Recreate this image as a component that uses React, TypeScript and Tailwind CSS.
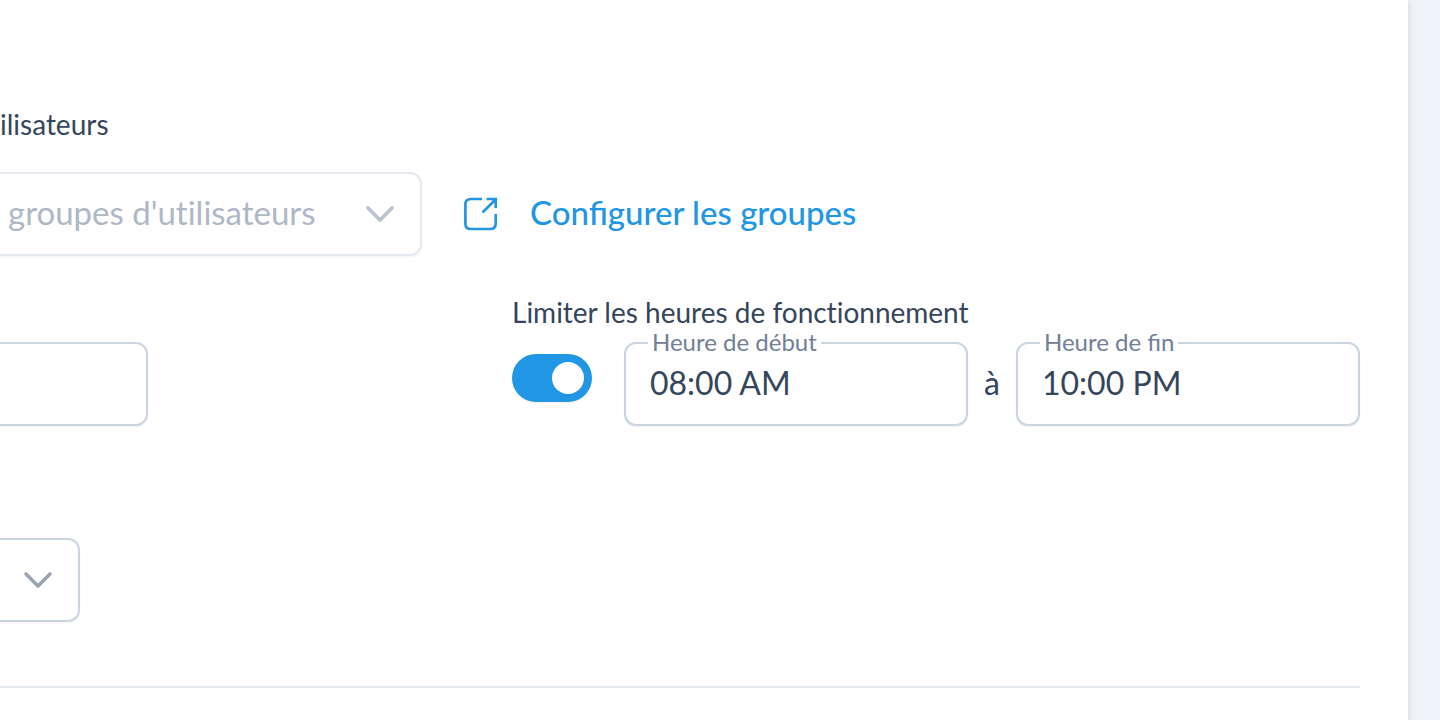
import { useState } from 'react';

function ChevronIcon({ className }: { className: string }) {
    return (
        <svg
            className={`pointer-events-none absolute top-1/2 h-8 w-8 -translate-y-1/2 ${className}`}
            viewBox="0 0 32 32"
            fill="none"
            stroke="currentColor"
            strokeWidth="3.6"
            strokeLinecap="round"
            strokeLinejoin="round"
            aria-hidden="true"
        >
            <path d="M4 10 16 22 28 10" />
        </svg>
    );
}

function ExternalIcon() {
    return (
        <svg
            className="h-9 w-9"
            viewBox="0 0 36 36"
            fill="none"
            stroke="currentColor"
            strokeWidth="2.7"
            aria-hidden="true"
        >
            <path d="M20 3H9Q3.4 3 3.4 8.6V27.4Q3.4 33 9 33H28Q33.7 33 33.7 27.4V18" />
            <path d="M20.5 16.5 33 4M24.5 3H33.7V12" />
        </svg>
    );
}

type TimeFieldProps = {
    id: string;
    label: string;
    value: string;
    onChange: (value: string) => void;
};

function TimeField({ id, label, value, onChange }: TimeFieldProps) {
    return (
        <div className="relative min-w-0 flex-1">
            <input
                id={id}
                type="text"
                value={value}
                onChange={e => onChange(e.target.value)}
                className="block h-21 w-full rounded-xl border-2 border-[#cbd5e1] bg-white px-6 pb-1 text-[32px] text-[#34465b] shadow-xs outline-none"
            />
            <label
                htmlFor={id}
                className="absolute -top-3 left-6 bg-white px-1 text-2xl leading-6 text-[#718096]"
            >
                {label}
            </label>
        </div>
    );
}

export default function App() {
    const [limited, setLimited] = useState(true);
    const [start, setStart] = useState('08:00 AM');
    const [end, setEnd] = useState('10:00 PM');

    return (
        <div className="min-h-screen bg-[#f1f4f9] pr-8 font-[Lato,sans-serif] text-[28px] text-[#34465b]">
            <main className="min-h-screen bg-white pr-12 shadow-[0_2px_8px_#cbd5e1]">
                {/* User groups */}
                <section className="pt-27">
                    <label htmlFor="groups" className="block leading-8 [font-variant-ligatures:none]">ilisateurs</label>
                    <div className="mt-8 flex items-center gap-10">
                        <div className="relative w-[422px] shrink-0">
                            <select
                                id="groups"
                                className="block h-21 w-full appearance-none rounded-r-xl border-2 border-l-0 border-[#e5e9f0] bg-white pr-20 pb-0.5 pl-2 text-[33px] text-[#aeb7c6] shadow-xs outline-none [font-variant-ligatures:none]"
                            >
                                <option>groupes d'utilisateurs</option>
                            </select>
                            <ChevronIcon className="right-[26px] text-[#b8c1cf]" />
                        </div>
                        <a href="#groupes" className="flex items-center gap-8 text-[#2196e5]">
                            <ExternalIcon />
                            <span className="pb-0.5 text-[33px] font-medium">Configurer les groupes</span>
                        </a>
                    </div>
                </section>

                {/* Opening hours */}
                <section className="mt-10 flex items-end">
                    <div className="w-[512px] shrink-0">
                        <input
                            type="text"
                            aria-label="Valeur"
                            className="block h-21 w-[148px] rounded-r-xl border-2 border-l-0 border-[#cbd5e1] bg-white px-4 text-[32px] shadow-xs outline-none"
                        />
                    </div>
                    <div className="min-w-0 flex-1">
                        <label htmlFor="limit" className="block leading-8 [font-variant-ligatures:none]">Limiter les heures de fonctionnement</label>
                        <div className="mt-3.5 flex items-center">
                            <input
                                id="limit"
                                type="checkbox"
                                role="switch"
                                checked={limited}
                                onChange={e => setLimited(e.target.checked)}
                                className="mr-8 mb-3 flex h-12 w-20 shrink-0 appearance-none items-center rounded-full bg-[#cbd5e1] px-2 shadow-xs before:h-8 before:w-8 before:rounded-full before:bg-white checked:justify-end checked:bg-[#2196e5]"
                            />
                            <TimeField id="start" label="Heure de début" value={start} onChange={setStart} />
                            <span className="w-12 pb-0.5 text-center text-[32px]">à</span>
                            <TimeField id="end" label="Heure de fin" value={end} onChange={setEnd} />
                        </div>
                    </div>
                </section>

                <section className="mt-28 border-b-2 border-[#e5e9f0] pb-16">
                    <div className="relative w-20">
                        <select
                            aria-label="Options"
                            className="block h-21 w-full appearance-none rounded-r-xl border-2 border-l-0 border-[#cbd5e1] bg-white shadow-xs outline-none"
                        />
                        <ChevronIcon className="right-[26px] text-[#9aa4b2]" />
                    </div>
                </section>
            </main>
        </div>
    );
}
